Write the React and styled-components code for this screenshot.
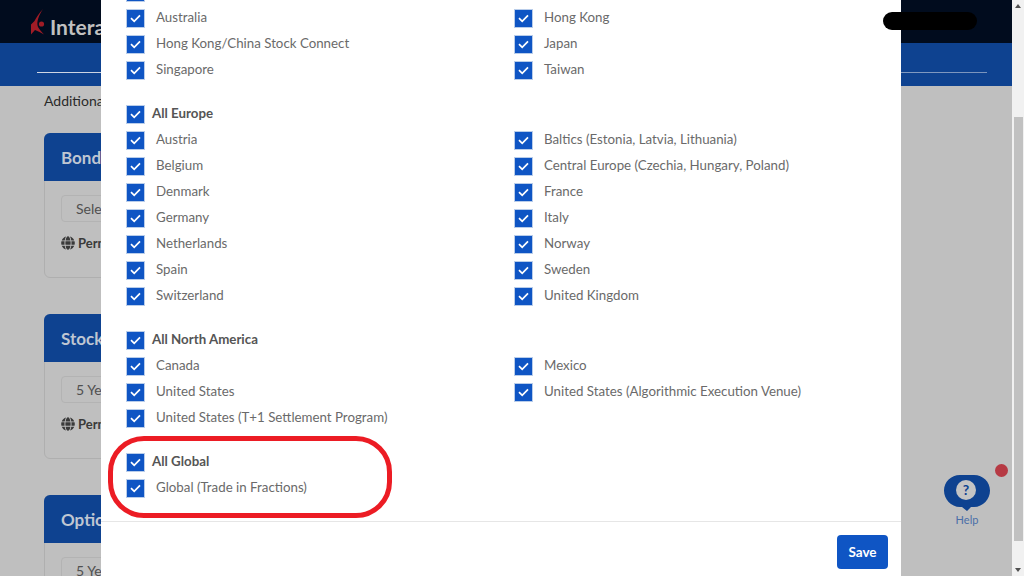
import React from "react";
import styled, { createGlobalStyle } from "styled-components";
import { FaGlobe } from "react-icons/fa";

const GROUPS = [
  {
    title: "",
    items: [
      ["Australia", "Hong Kong"],
      ["Hong Kong/China Stock Connect", "Japan"],
      ["Singapore", "Taiwan"],
    ],
  },
  {
    title: "All Europe",
    items: [
      ["Austria", "Baltics (Estonia, Latvia, Lithuania)"],
      ["Belgium", "Central Europe (Czechia, Hungary, Poland)"],
      ["Denmark", "France"],
      ["Germany", "Italy"],
      ["Netherlands", "Norway"],
      ["Spain", "Sweden"],
      ["Switzerland", "United Kingdom"],
    ],
  },
  {
    title: "All North America",
    items: [
      ["Canada", "Mexico"],
      ["United States", "United States (Algorithmic Execution Venue)"],
      ["United States (T+1 Settlement Program)"],
    ],
  },
  {
    title: "All Global",
    items: [["Global (Trade in Fractions)"]],
  },
];

const CARDS = [
  { title: "Bonds", value: "Select" },
  { title: "Stocks", value: "5 Years" },
  { title: "Options", value: "5 Years" },
];

function Check() {
  return (
    <Box>
      <svg width="11" height="9" viewBox="0 0 11 9">
        <path d="M1 4.2 4.2 7.4 10 1.4" fill="none" stroke="#fff" strokeWidth="1.7" />
      </svg>
    </Box>
  );
}

export default function App() {
  return (
    <>
      <Global />
      <Screen>
        <Page>
          <TopBar>
            <svg viewBox="0 0 14 26" width="14" height="26">
              <path d="M12 0 C8 4 5 9 3.5 12 L0 15.5 V25.5 L4 21 C7 22 10 24 13 25.5 C10 22 8 20 7 18 C5 13 8 6 12 0Z" fill="#a01c26" />
              <circle cx="10.5" cy="15" r="2.6" fill="#a01c26" />
            </svg>
            <Brand>Interactive</Brand>
          </TopBar>
          <NavBar>
            <NavLine />
          </NavBar>
          <Content>
            <Intro>Additional</Intro>
            {CARDS.map((card) => (
              <Card key={card.title}>
                <CardHead>{card.title}</CardHead>
                <CardBody>
                  <FakeSelect>{card.value}</FakeSelect>
                  <Permission>
                    <FaGlobe size={14} />
                    Permission
                  </Permission>
                </CardBody>
              </Card>
            ))}
          </Content>
          <HelpBlock>
            <HelpDot />
            <svg width="46" height="37" viewBox="0 0 46 37">
              <path d="M16 0 H30 C39 0 46 7 46 15.5 C46 24 39 32 30 32 H27 L23 36 L18 32 H16 C7 32 0 24 0 15.5 C0 7 7 0 16 0Z" fill="#0e4290" />
              <circle cx="22" cy="15" r="10" fill="#c4c4c4" />
              <text x="22" y="20" textAnchor="middle" fontSize="14" fontWeight="700" fill="#0e4290" fontFamily="Lato, sans-serif">?</text>
            </svg>
            <HelpLabel>Help</HelpLabel>
          </HelpBlock>
        </Page>
        <ScrollBar>
          <ScrollArrow />
          <ScrollThumb />
          <ScrollArrow $down />
        </ScrollBar>
        <Modal>
          <ModalBody>
            <Markets>
              {GROUPS.map((group, i) => (
                <Group key={i}>
                  <Row>
                    <Check />
                    {group.title && <GroupTitle>{group.title}</GroupTitle>}
                  </Row>
                  {group.items.map((pair) => (
                    <Pair key={pair[0]}>
                      {pair.map((name) => (
                        <Row key={name}>
                          <Check />
                          <ItemLabel>{name}</ItemLabel>
                        </Row>
                      ))}
                    </Pair>
                  ))}
                </Group>
              ))}
            </Markets>
          </ModalBody>
          <ModalFooter>
            <SaveButton>Save</SaveButton>
          </ModalFooter>
        </Modal>
        <RedMark />
        <BlackPill />
      </Screen>
    </>
  );
}

/* Styles */
const Global = createGlobalStyle`
  html, body {
    margin: 0;
    padding: 0;
    overflow: hidden;
  }
  body {
    font-family: Lato, "Liberation Sans", sans-serif;
  }
`;

const Screen = styled.div`
  position: relative;
  display: flex;
  width: 1024px;
  height: 576px;
  overflow: hidden;
  background: #bfbfbf;
`;

const Page = styled.div`
  position: relative;
  flex: 1;
  display: flex;
  flex-direction: column;
  overflow: hidden;
`;

const TopBar = styled.div`
  flex: none;
  height: 43px;
  box-sizing: border-box;
  display: flex;
  align-items: flex-start;
  gap: 5px;
  padding: 9px 0 0 31px;
  background: #010c1e;
`;

const Brand = styled.span`
  margin-top: 5px;
  color: #c0c0c0;
  font-size: 21px;
  font-weight: 700;
`;

const NavBar = styled.div`
  flex: none;
  height: 43px;
  padding: 29px 25px 0 37px;
  box-sizing: border-box;
  background: #0e4290;
`;

const NavLine = styled.div`
  height: 1px;
  background: linear-gradient(90deg, #d0d7e4, #7a94bd);
`;

const Content = styled.div`
  display: flex;
  flex-direction: column;
  gap: 36px;
  padding: 6px 0 0 44px;
`;

const Intro = styled.div`
  flex: none;
  height: 18px;
  margin-bottom: -13px;
  font-size: 14px;
  color: #2a2a2a;
`;

const Card = styled.section`
  flex: none;
  width: 400px;
  height: 145px;
  border: 1px solid #afafaf;
  border-radius: 6px;
  box-sizing: border-box;
`;

const CardHead = styled.div`
  height: 48px;
  margin: -1px -1px 0;
  padding-left: 17px;
  display: flex;
  align-items: center;
  border-radius: 6px 6px 0 0;
  background: #0e4290;
  color: #bfc6d2;
  font-size: 17px;
  font-weight: 700;
`;

const CardBody = styled.div`
  padding: 14px 16px;
`;

const FakeSelect = styled.div`
  height: 27px;
  box-sizing: border-box;
  padding-left: 14px;
  display: flex;
  align-items: center;
  border: 1px solid #b3b3b3;
  border-radius: 4px;
  font-size: 14px;
  color: #505050;
`;

const Permission = styled.div`
  margin-top: 13px;
  display: flex;
  align-items: center;
  gap: 3px;
  font-size: 13px;
  font-weight: 700;
  color: #3a3a3a;
`;

const HelpBlock = styled.div`
  position: absolute;
  left: 937px;
  top: 475px;
  width: 60px;
  display: flex;
  flex-direction: column;
  align-items: center;
`;

const HelpDot = styled.span`
  position: absolute;
  top: -11px;
  right: -11px;
  width: 13px;
  height: 13px;
  border-radius: 50%;
  background: #b63a44;
`;

const HelpLabel = styled.span`
  margin-top: 1px;
  font-size: 11px;
  color: #4a6ea8;
`;

const ScrollBar = styled.div`
  flex: none;
  width: 12px;
  display: flex;
  flex-direction: column;
  background: #f1f1f1;
`;

const ScrollArrow = styled.div`
  flex: none;
  height: 12px;
  margin-top: ${(p) => (p.$down ? "auto" : "0")};
  display: flex;
  align-items: center;
  justify-content: center;
  &::before {
    content: "";
    border-left: 3px solid transparent;
    border-right: 3px solid transparent;
    border-${(p) => (p.$down ? "top" : "bottom")}: 4px solid #505050;
  }
`;

const ScrollThumb = styled.div`
  flex: none;
  height: 424px;
  margin: 105px 1px 0 2px;
  background: #c1c1c1;
`;

const Modal = styled.div`
  position: absolute;
  left: 101px;
  top: 0;
  width: 800px;
  height: 576px;
  display: flex;
  flex-direction: column;
  background: #fff;
`;

const ModalBody = styled.div`
  height: 521px;
  flex: none;
  overflow: hidden;
`;

const Markets = styled.div`
  display: flex;
  flex-direction: column;
  gap: 18px;
  margin-top: -21px;
  padding-left: 25px;
`;

const Group = styled.div`
  display: flex;
  flex-direction: column;
`;

const Pair = styled.div`
  display: grid;
  grid-template-columns: 388px 1fr;
`;

const Row = styled.div`
  height: 26px;
  display: flex;
  align-items: center;
`;

const Box = styled.span`
  flex: none;
  width: 19px;
  height: 19px;
  display: flex;
  align-items: center;
  justify-content: center;
  box-sizing: border-box;
  border: 1px solid #b9cdea;
  background: #0f55c4;
`;

const GroupTitle = styled.span`
  margin: 0 0 2px 7px;
  font-size: 13.3px;
  font-weight: 700;
  color: #555;
`;

const ItemLabel = styled.span`
  margin: 0 0 2px 11px;
  font-size: 13.3px;
  color: #6a6a6a;
`;

const ModalFooter = styled.div`
  flex: 1;
  display: flex;
  justify-content: flex-end;
  align-items: flex-start;
  padding: 13px 13px 0 0;
  border-top: 1px solid #e6e6e6;
`;

const SaveButton = styled.button`
  width: 51px;
  height: 34px;
  padding: 0;
  border: 0;
  border-radius: 4px;
  background: #0f55c4;
  color: #fff;
  font-family: inherit;
  font-size: 13.5px;
  font-weight: 700;
`;

const RedMark = styled.div`
  position: absolute;
  left: 108px;
  top: 436px;
  width: 284px;
  height: 82px;
  box-sizing: border-box;
  border: 5px solid #ec1c24;
  border-radius: 36px;
`;

const BlackPill = styled.div`
  position: absolute;
  left: 883px;
  top: 12px;
  width: 94px;
  height: 18px;
  border-radius: 9px;
  background: #000;
`;
